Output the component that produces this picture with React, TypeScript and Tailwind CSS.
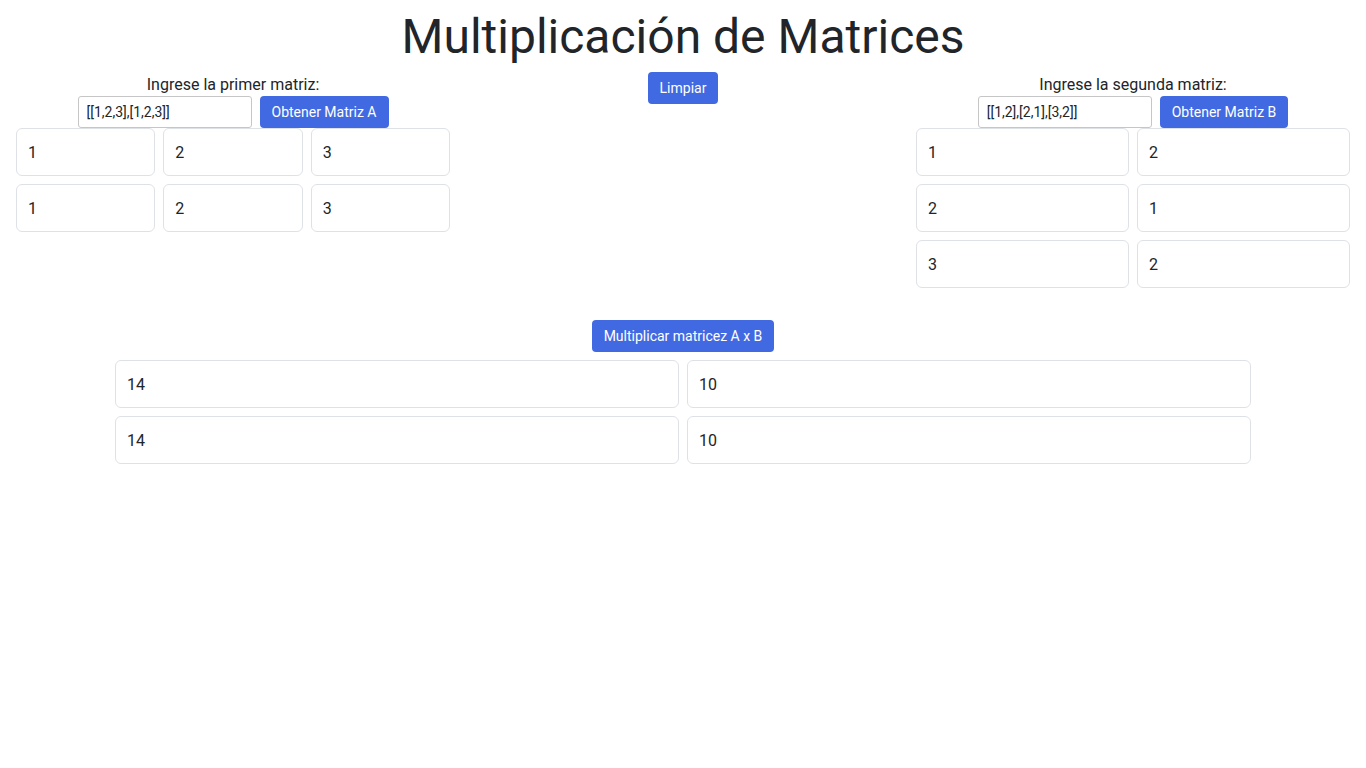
const matA = [
  [1, 2, 3],
  [1, 2, 3],
]
const matB = [
  [1, 2],
  [2, 1],
  [3, 2],
]
const result = [
  [14, 10],
  [14, 10],
]

const Cell = ({ value }: { value: number }) => (
  <div className="h-12 border border-[#dee2e6] rounded-md pl-[11px] pr-3 pt-0.5 flex items-center text-base text-[#212529] bg-white">
    {value}
  </div>
)

const MatrixGrid = ({ data, cols }: { data: number[][]; cols: string }) => (
  <div className={`grid ${cols} gap-2`}>
    {data.flat().map((v, i) => (
      <Cell key={i} value={v} />
    ))}
  </div>
)

const InputBlock = ({
  label,
  value,
  button,
}: {
  label: string
  value: string
  button: string
}) => (
  <div className="flex flex-col items-center">
    <label className="text-base leading-6 pt-px -mb-px text-[#212529]">{label}</label>
    <div className="flex gap-2 items-center">
      <input
        type="text"
        defaultValue={value}
        className="w-[174px] h-8 border border-[#c6c6c6] rounded-[3px] px-2 text-sm text-[#212529] outline-none"
      />
      <button className="h-8 px-3 rounded bg-[#4169e1] text-white text-sm">{button}</button>
    </div>
  </div>
)

export default function App() {
  return (
    <div className="w-full min-h-screen bg-white font-['Roboto',sans-serif] px-4">
      <h1 className="text-center text-[48px] leading-[70px] pt-0.5 text-[#212529]">
        Multiplicación de Matrices
      </h1>

      <div className="grid grid-cols-3 gap-4 items-start">
        <div className="flex flex-col">
          <InputBlock label="Ingrese la primer matriz:" value="[[1,2,3],[1,2,3]]" button="Obtener Matriz A" />
          <MatrixGrid data={matA} cols="grid-cols-3" />
        </div>

        <div className="flex justify-center">
          <button className="h-8 px-3 rounded bg-[#4169e1] text-white text-sm">Limpiar</button>
        </div>

        <div className="flex flex-col">
          <InputBlock label="Ingrese la segunda matriz:" value="[[1,2],[2,1],[3,2]]" button="Obtener Matriz B" />
          <MatrixGrid data={matB} cols="grid-cols-2" />
        </div>
      </div>

      <div className="flex flex-col items-center mt-8 gap-2">
        <button className="h-8 px-3 rounded bg-[#4169e1] text-white text-sm">Multiplicar matricez A x B</button>
        <div className="w-[1136px]">
          <MatrixGrid data={result} cols="grid-cols-2" />
        </div>
      </div>
    </div>
  )
}
